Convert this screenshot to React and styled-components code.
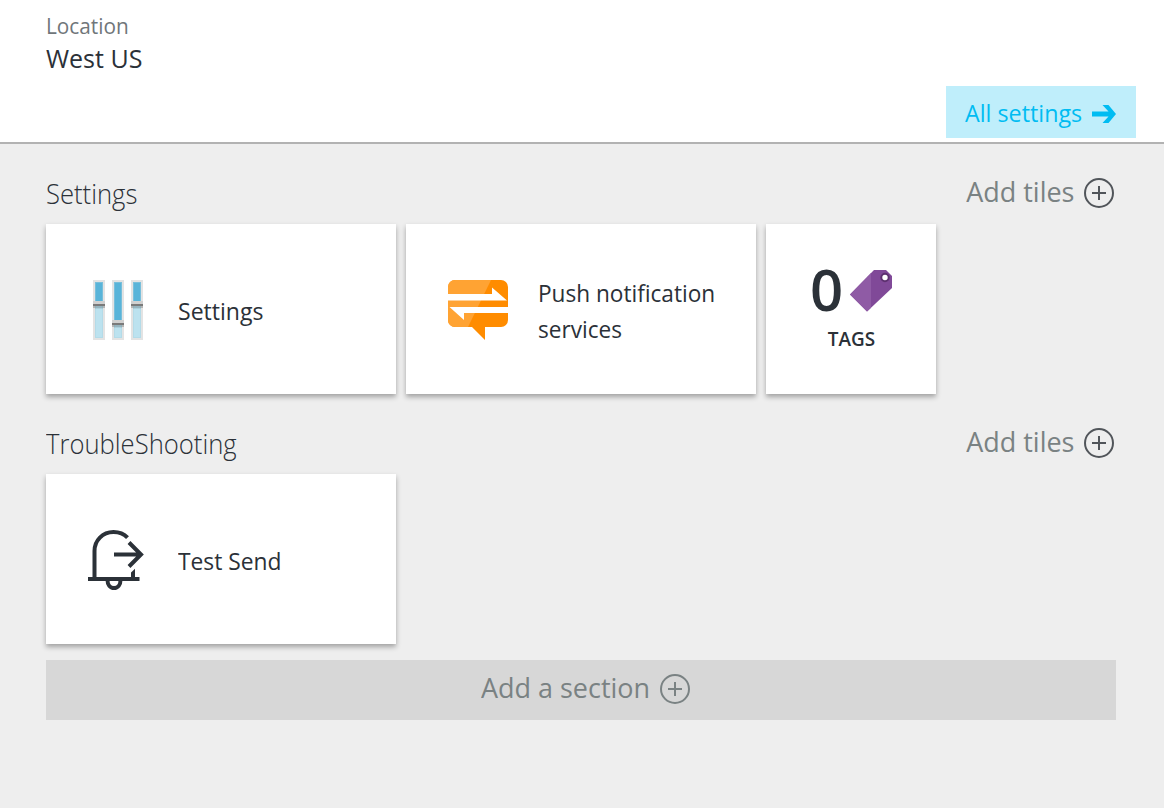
import React from "react";
import styled, { createGlobalStyle } from "styled-components";

const ink = "#2b3138";
const gray = "#7a8283";

const GlobalStyle = createGlobalStyle`
  * { box-sizing: border-box; }
  body {
    margin: 0;
    background: #eeeeee;
    color: ${ink};
    font-family: "Open Sans", "Noto Sans", sans-serif;
    overflow: hidden;
  }
  svg { display: block; flex: none; }
`;

const Blade = styled.main`
  width: 1164px;
  height: 808px;
  background: #eeeeee;
`;

/* Slightly condensed lettering; $trim removes the width freed by the scaling. */
const Condensed = styled.span`
  display: inline-block;
  transform: scaleX(${(p) => p.$x});
  transform-origin: ${(p) => p.$origin || "left"} center;
  margin-right: ${(p) => -(p.$trim || 0)}px;
  padding-bottom: ${(p) => p.$lift || 0}px;
`;

const Essentials = styled.header`
  height: 144px;
  padding: 9px 28px 4px 46px;
  background: #fff;
  border-bottom: 2px solid #b2b2b2;
  display: flex;
  flex-direction: column;
`;

const Label = styled.div`
  font-size: 22px;
  line-height: 32px;
  color: #70767a;
`;

const Value = styled.div`
  font-size: 25.5px;
  line-height: 34px;
`;

const AllSettings = styled.a`
  margin-top: auto;
  align-self: flex-end;
  width: 190px;
  height: 52px;
  padding: 3px 20px 0 19px;
  display: flex;
  align-items: center;
  justify-content: space-between;
  background: #bfeefb;
  color: #00bcf2;
  font-size: 24px;
  white-space: nowrap;
`;

const Board = styled.div`
  padding: 0 48px 0 46px;
`;

const SectionHead = styled.div`
  height: 80px;
  padding: 0 2px 0 0;
  display: flex;
  justify-content: space-between;
`;

const SectionTitle = styled.h2`
  margin: 0;
  padding-top: 29px;
  font-size: 28px;
  font-weight: 300;
  line-height: 40px;
`;

const AddTiles = styled.a`
  height: 98px;
  display: flex;
  align-items: center;
  gap: 10px;
  color: ${gray};
  font-size: 27.5px;
  line-height: 38px;
  white-space: nowrap;
`;

const Tiles = styled.div`
  display: flex;
  gap: 10px;
`;

const Tile = styled.article`
  width: ${(p) => (p.$small ? 170 : 350)}px;
  height: 170px;
  padding: ${(p) => (p.$small ? "0" : "4px 0 0 42px")};
  display: flex;
  flex-direction: ${(p) => (p.$small ? "column" : "row")};
  align-items: center;
  background: #fff;
  box-shadow: 0 3px 5px rgba(0, 0, 0, 0.32);
`;

const TileIcon = styled.div`
  width: 90px;
  padding-bottom: 2px;
`;

const TileText = styled.div`
  font-size: 24px;
  line-height: 36px;
  white-space: pre-line;
`;

const CountRow = styled.div`
  height: 86px;
  padding: 46px 0 0 0;
  display: flex;
  gap: 7px;
`;

const Count = styled.span`
  margin-top: -2px;
  font-size: 58px;
  line-height: 42px;
  font-weight: 600;
`;

const CountLabel = styled.div`
  margin-top: 14px;
  font-size: 19.5px;
  line-height: 30px;
  font-weight: 600;
`;

const AddSection = styled.a`
  height: 60px;
  margin-top: 16px;
  padding: 0 0 2px 9px;
  display: flex;
  align-items: center;
  justify-content: center;
  gap: 10px;
  background: #d7d7d7;
  color: ${gray};
  font-size: 27.5px;
  line-height: 38px;
`;

function Plus({ color = "#51555a" }) {
  return (
    <svg width="30" height="30" viewBox="0 0 30 30" fill="none" stroke={color} strokeWidth="2">
      <circle cx="15" cy="15" r="14" />
      <path d="M15 8v14M8 15h14" />
    </svg>
  );
}

function Arrow() {
  return (
    <svg width="24" height="20" viewBox="0 0 24 20" fill="#00bcf2">
      <path d="M0 7.500h16.500L10.500 1h6L24 10l-7.500 9h-6l6-6.500H0z" />
    </svg>
  );
}

function Sliders() {
  const bars = [
    { x: 5, y: 22 },
    { x: 24, y: 41 },
    { x: 43, y: 22 },
  ];
  return (
    <svg width="60" height="60" viewBox="0 0 60 60" shapeRendering="crispEdges">
      {bars.map(({ x, y }) => (
        <g key={x}>
          <rect x={x} width="12" height="60" fill="#e3e3e3" />
          <rect x={x + 2} y="2" width="8" height="56" fill="#b4dbe8" />
          <rect x={x + 3} y="3" width="6" height="54" fill="#bce2ef" />
          <rect x={x + 2} y="2" width="8" height={y - 2} fill="#79bfdb" />
          <rect x={x + 3} y="3" width="6" height={y - 3} fill="#59b4d9" />
          <rect x={x} y={y - 1} width="12" height="3" fill="#d0d0d0" />
          <rect x={x} y={y + 2} width="12" height="2" fill="#7a7a7a" />
          <rect x={x} y={y + 4} width="12" height="2" fill="#000" opacity=".2" />
          <rect x={x + 2} y={y + 6} width="8" height="1" fill="#000" opacity=".08" />
        </g>
      ))}
    </svg>
  );
}

function PushBubble() {
  return (
    <svg width="60" height="60" viewBox="0 0 60 60">
      <path d="M7 0h46a7 7 0 0 1 7 7v33a7 7 0 0 1-7 7H37v13L24 47H7a7 7 0 0 1-7-7V7a7 7 0 0 1 7-7z" fill="#ff8c00" />
      <path d="M7 0h36L20 47H7a7 7 0 0 1-7-7V7a7 7 0 0 1 7-7z" fill="#ffa333" />
      <path d="M0 14h44V7.500L59 20.500H0zM60 33H16v7L1.500 27H60z" fill="#fff" />
    </svg>
  );
}

function Tag() {
  return (
    <svg width="42" height="42" viewBox="0 0 42 42">
      <path d="M24 0h12l6 6v12L17 41.500 0 24.500z" fill="#804998" />
      <path d="M21 3.060 0 24.500l17 17 4-3.760z" fill="#8f5ba5" />
      <circle cx="35" cy="7.500" r="3.700" fill="#fff" stroke="#5d3070" strokeWidth="2" />
    </svg>
  );
}

function BellSend() {
  return (
    <svg width="60" height="60" viewBox="0 0 60 60" fill="none" stroke={ink} strokeWidth="4">
      <path d="M6.500 48V21C6.500 10.500 14.500 2 25.500 2c5.500 0 10.500 2 14 5.700M0 49h51.500" />
      <path d="M26 24.500h27M41 12.500l12 12-12 12" />
      <path d="M19.500 50c0 4.500 2.500 8 6.500 8s6.500-3.500 6.500-8" />
      <path d="M43 48v-5.500l4-3.800V48z" fill={ink} stroke="none" />
    </svg>
  );
}

function Section({ title, children }) {
  return (
    <section>
      <SectionHead>
        <SectionTitle><Condensed $x={0.915}>{title}</Condensed></SectionTitle>
        <AddTiles>
          <Condensed $x={0.98} $origin="right" $lift={2}>Add tiles</Condensed>
          <Plus />
        </AddTiles>
      </SectionHead>
      <Tiles>{children}</Tiles>
    </section>
  );
}

export default function App() {
  return (
    <Blade>
      <GlobalStyle />
      <Essentials>
        <Label><Condensed $x={0.945}>Location</Condensed></Label>
        <Value><Condensed $x={0.98}>West US</Condensed></Value>
        <AllSettings>
          <Condensed $x={0.97} $lift={2}>All settings</Condensed>
          <Arrow />
        </AllSettings>
      </Essentials>
      <Board>
        <Section title="Settings">
          <Tile>
            <TileIcon><Sliders /></TileIcon>
            <TileText><Condensed $x={0.96}>Settings</Condensed></TileText>
          </Tile>
          <Tile>
            <TileIcon><PushBubble /></TileIcon>
            <TileText><Condensed $x={0.942}>{"Push notification\nservices"}</Condensed></TileText>
          </Tile>
          <Tile $small>
            <CountRow>
              <Count>0</Count>
              <Tag />
            </CountRow>
            <CountLabel><Condensed $x={0.97} $origin="center">TAGS</Condensed></CountLabel>
          </Tile>
        </Section>
        <Section title="TroubleShooting">
          <Tile>
            <TileIcon><BellSend /></TileIcon>
            <TileText><Condensed $x={0.95}>Test Send</Condensed></TileText>
          </Tile>
        </Section>
        <AddSection>
          <Condensed $x={0.98} $trim={3.4} $lift={2}>Add a section</Condensed>
          <Plus color={gray} />
        </AddSection>
      </Board>
    </Blade>
  );
}
